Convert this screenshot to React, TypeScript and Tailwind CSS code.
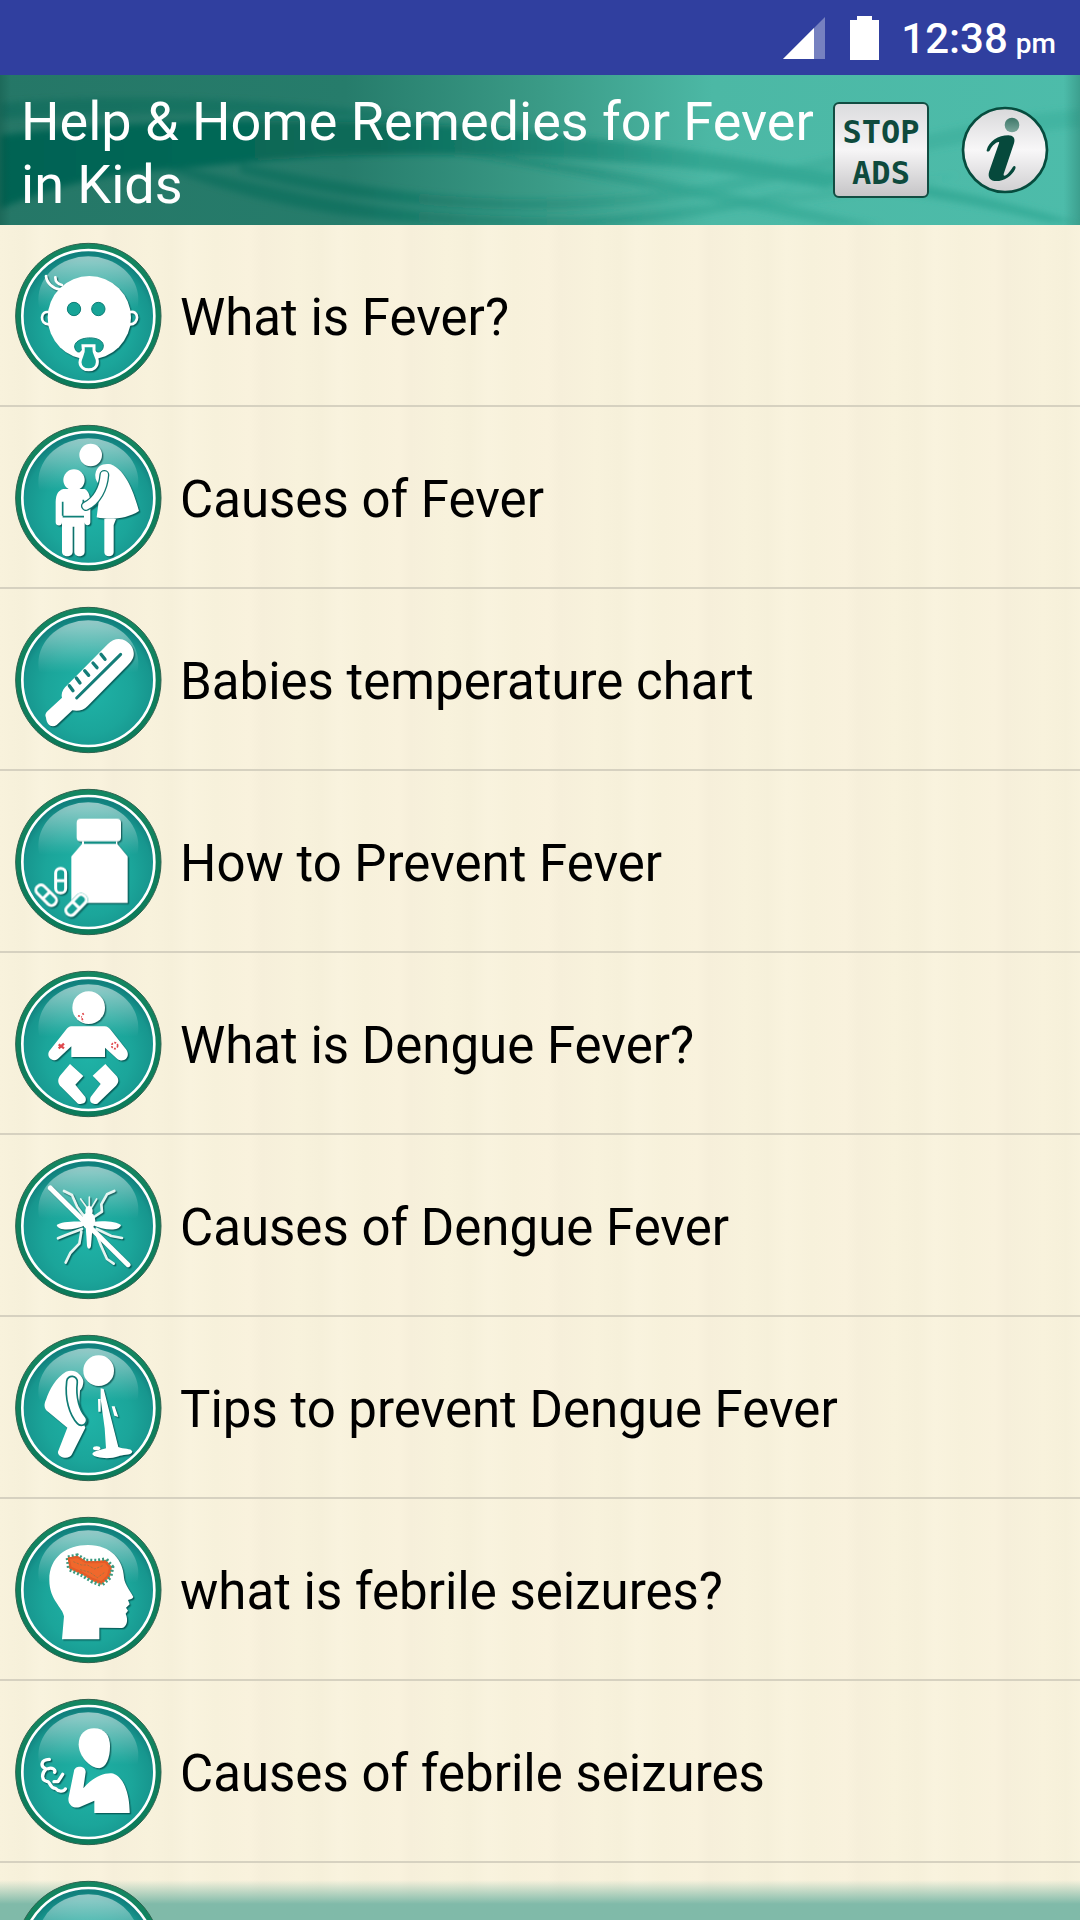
import { useId } from "react";
import type { ReactNode } from "react";

type Topic = {
  label: string;
  icon: ReactNode;
};

function BabyFace() {
  return (
    <>
      <g fill="none" stroke="#fff" strokeWidth="8" strokeLinecap="round">
        <path d="M138 139 C140 160 158 176 180 180" />
        <path d="M166 143 C166 156 174 164 186 166" />
        <path d="M148 248 C120 240 118 284 146 284" />
        <path d="M388 248 C418 238 420 286 388 284" />
      </g>
      <circle cx="268" cy="264" r="125" fill="#fff" />
      <g fill="#17a497" stroke="#0d7d76" strokeWidth="3">
        <circle cx="222" cy="238" r="20" />
        <circle cx="295" cy="238" r="20" />
        <path d="M224 352 C222 318 312 314 310 350 C308 368 290 372 286 360 L244 360 C240 372 226 368 224 352 Z" />
      </g>
      <path
        d="M249 348 H282 V360 C280 370 294 384 292 398 C290 428 242 428 240 398 C240 384 252 370 250 360 Z"
        fill="#17a497"
        stroke="#fff"
        strokeWidth="9"
      />
    </>
  );
}

function MotherChild() {
  return (
    <>
      <g fill="#fff">
        <circle cx="272" cy="130" r="34" />
        <circle cx="222" cy="205" r="32" />
        <path d="M286 188 C290 160 312 154 332 158 C378 174 404 250 417 298 C380 322 330 326 290 317 L302 222 C290 212 285 202 286 188 Z" />
        <path d="M313 322 H348 L341 340 V422 C341 438 313 438 313 422 Z" />
        <path d="M190 232 H254 C266 238 270 252 271 270 V332 C271 344 254 344 254 332 V322 V420 C254 438 223 438 223 420 V345 H218 V420 C218 438 186 438 186 420 V332 C186 346 167 344 167 332 V270 C168 246 176 236 190 232 Z" />
      </g>
      <path d="M188 315 H252 M188 270 V312 M250 264 V280" stroke="#0f8078" strokeWidth="5" fill="none" />
      <path d="M313 190 C310 230 290 268 258 283" fill="none" stroke="#0f7770" strokeWidth="30" strokeLinecap="round" />
      <path d="M313 190 C310 230 290 268 258 283" fill="none" stroke="#fff" strokeWidth="22" strokeLinecap="round" />
    </>
  );
}

function Thermometer() {
  return (
    <>
      <path
        d="M138 372 C134 364 137 358 143 352 L186 312 C182 298 190 284 202 274 L323 152 C348 124 382 136 396 160 C408 184 398 200 384 214 L263 337 C250 350 234 354 217 350 L170 394 C154 404 140 392 138 372 Z"
        fill="#fff"
      />
      <path d="M230 313 L362 182" stroke="#147d78" strokeWidth="9" strokeLinecap="round" />
      <path
        d="M208 276 L219 291 M229 253 L240 268 M254 231 L266 245 M279 208 L291 222 M303 182 L315 197"
        stroke="#147d78"
        strokeWidth="10"
        strokeLinecap="round"
      />
    </>
  );
}

function MedicineBottle() {
  return (
    <>
      <rect x="230" y="129" width="133" height="68" rx="12" fill="#fff" />
      <path d="M246 197 H352 V205 L383 242 V382 H214 V242 L246 205 Z" fill="#fff" />
      <path d="M252 201 H348" stroke="#108e84" strokeWidth="7" />
      <g fill="#17a095" stroke="#fff" strokeWidth="9">
        <g>
          <rect x="167" y="278" width="30" height="74" rx="14" />
          <path d="M167 315 H197" />
        </g>
        <g transform="rotate(-45 138 358)">
          <rect x="123" y="322" width="30" height="74" rx="14" />
          <path d="M123 359 H153" />
        </g>
        <g transform="rotate(44 228 388)">
          <rect x="208" y="346" width="40" height="84" rx="18" fill="#17a095" stroke="none" />
          <rect x="213" y="351" width="30" height="74" rx="14" />
          <path d="M213 388 H243" />
        </g>
      </g>
    </>
  );
}

function BabyRash() {
  return (
    <>
      <g fill="#fff">
        <circle cx="266" cy="150" r="49" />
        <path d="M214 206 H314 C322 206 326 210 332 216 L378 275 C394 296 372 318 352 304 L315 270 V298 H214 V266 L174 303 C154 318 134 292 152 275 L198 216 C203 210 208 206 214 206 Z" />
        <path d="M210 319 L250 355 L226 381 L256 418 C262 434 250 442 234 438 L180 384 C172 374 174 362 180 354 Z" />
        <path d="M316 319 L278 354 L302 379 L272 418 C266 434 276 442 292 438 L348 384 C358 374 356 362 349 354 Z" />
      </g>
      <g fill="none" stroke="#e0494d" strokeWidth="5" strokeDasharray="6 4">
        <path d="M234 174 L246 178 M248 166 L252 174 M246 182 L249 192" />
        <path d="M176 260 L192 272 M192 258 L176 272" strokeWidth="7" strokeDasharray="none" />
        <circle cx="344" cy="264" r="9" />
      </g>
    </>
  );
}

function Mosquito() {
  return (
    <>
      <g fill="none" stroke="#e6f5f2" strokeWidth="8" strokeLinecap="round" strokeLinejoin="round">
        <path d="M192 154 L216 166 L232 202 L254 232" />
        <path d="M343 154 L321 164 L304 194 L306 216 L282 232" />
        <path d="M174 296 L200 285 L246 268" />
        <path d="M366 295 L334 289 L290 268" />
        <path d="M197 369 L211 340 L238 312 L244 276" />
        <path d="M341 372 L321 358 L303 318 L288 278" />
        <path d="M242 178 L260 203 M290 178 L275 203 M268 172 V206" strokeWidth="5" />
      </g>
      <g fill="#fff">
        <ellipse cx="267" cy="214" rx="11" ry="16" />
        <ellipse cx="266" cy="243" rx="20" ry="26" />
        <path d="M257 258 H278 L273 318 C271 330 263 330 261 318 Z" />
        <path d="M256 246 C220 244 182 246 170 256 C174 276 226 272 256 256 Z" />
        <path d="M278 246 C314 242 352 246 363 256 C356 278 306 270 278 256 Z" />
      </g>
      <path d="M151 145 L384 375" stroke="#fff" strokeWidth="15" strokeLinecap="round" />
    </>
  );
}

function Vomiting() {
  return (
    <>
      <g fill="#fff">
        <circle cx="296" cy="147" r="46" />
        <path d="M198 150 C224 140 246 158 250 178 C250 190 246 202 240 206 L236 270 L256 318 L216 398 C208 416 172 408 174 390 L202 318 L146 272 C130 262 132 246 138 234 C148 204 168 168 198 150 Z" />
        <path d="M302 200 L311 202 L355 376 C370 384 394 378 397 390 C394 402 364 398 356 404 C330 414 284 410 277 398 C278 388 298 386 318 380 L314 320 L302 232 Z" />
        <ellipse cx="290" cy="380" rx="11" ry="6" />
        <path d="M294 232 L302 232 V270 H295 Z M335 254 L344 254 L355 286 L343 282 Z" />
      </g>
      <path d="M216 180 C210 230 224 274 244 295" fill="none" stroke="#0e7b74" strokeWidth="37" strokeLinecap="round" />
      <path d="M216 180 C210 230 224 274 244 295" fill="none" stroke="#fff" strokeWidth="27" strokeLinecap="round" />
    </>
  );
}

function HeadBrain() {
  return (
    <>
      <path
        d="M186 407 L192 338 C188 310 148 290 148 228 C148 160 200 124 264 124 C334 124 370 170 372 222 C374 244 396 268 400 280 C398 286 390 286 384 289 L389 302 L378 312 L384 321 L377 330 C386 350 380 370 366 373 L298 372 V407 Z"
        fill="#fff"
      />
      <path
        d="M204 162 L232 156 L258 172 L290 172 L318 168 L336 190 L330 220 L304 243 L278 233 L248 214 L208 196 Z"
        fill="#f26b2b"
        stroke="#3c9a80"
        strokeWidth="14"
        strokeDasharray="6 6"
      />
      <path
        d="M206 164 L232 160 L258 176 L290 176 L316 174 L330 192 L324 216 L304 236 L278 226 L248 208 L212 192 Z"
        fill="#f0682c"
        stroke="#e45a28"
        strokeWidth="6"
        strokeLinejoin="round"
      />
      <path
        d="M220 174 L244 184 L262 184 L284 196 L308 186 M240 198 L270 206 L292 222 L314 206"
        fill="none"
        stroke="#a9713f"
        strokeWidth="3"
        strokeDasharray="7 4"
      />
    </>
  );
}

function Coughing() {
  return (
    <>
      <g fill="#fff">
        <path d="M282 128 C314 128 330 150 330 182 C330 218 318 246 298 248 C270 248 236 212 236 176 C236 146 256 128 282 128 Z" />
        <path d="M222 256 C224 238 258 238 257 260 L250 308 C276 278 306 262 334 263 C372 268 390 330 389 382 H283 V345 L238 365 C214 370 202 352 206 334 Z" />
      </g>
      <path
        d="M148 221 C122 222 120 242 138 250 C124 264 124 284 140 287 C152 286 148 308 166 308 C174 318 190 320 196 310 M144 249 C156 244 168 252 164 260 M188 266 L174 288 L162 288"
        fill="none"
        stroke="#fff"
        strokeWidth="10"
        strokeLinecap="round"
        strokeLinejoin="round"
      />
    </>
  );
}

const topics: Topic[] = [
  { label: "What is Fever?", icon: <BabyFace /> },
  { label: "Causes of Fever", icon: <MotherChild /> },
  { label: "Babies temperature chart", icon: <Thermometer /> },
  { label: "How to Prevent Fever", icon: <MedicineBottle /> },
  { label: "What is Dengue Fever?", icon: <BabyRash /> },
  { label: "Causes of Dengue Fever", icon: <Mosquito /> },
  { label: "Tips to prevent Dengue Fever", icon: <Vomiting /> },
  { label: "what is febrile seizures?", icon: <HeadBrain /> },
  { label: "Causes of febrile seizures", icon: <Coughing /> },
  { label: "", icon: null },
];

function Badge({ children }: { children: ReactNode }) {
  const id = useId();

  return (
    <svg viewBox="45 37 444 444" className="size-[148px] shrink-0" aria-hidden="true">
      <defs>
        <linearGradient id={`${id}rim`} x1="0" y1="0" x2="0" y2="1">
          <stop offset="0" stopColor="#148661" />
          <stop offset="1" stopColor="#0b7a5a" />
        </linearGradient>
        <radialGradient id={`${id}disc`} cx="0.5" cy="0.58" r="0.55">
          <stop offset="0" stopColor="#1fb3a7" />
          <stop offset="0.6" stopColor="#1ba59a" />
          <stop offset="0.88" stopColor="#17968e" />
          <stop offset="1" stopColor="#11807d" />
        </radialGradient>
        <linearGradient id={`${id}gloss`} x1="0" y1="0" x2="0" y2="1">
          <stop offset="0" stopColor="#fff" stopOpacity="0.55" />
          <stop offset="0.25" stopColor="#fff" stopOpacity="0.32" />
          <stop offset="0.5" stopColor="#fff" stopOpacity="0.08" />
          <stop offset="0.6" stopColor="#fff" stopOpacity="0" />
        </linearGradient>
      </defs>
      <circle cx="265" cy="259" r="218" fill={`url(#${id}rim)`} stroke="#2f6350" strokeWidth="3" />
      <circle cx="265" cy="259" r="198" fill={`url(#${id}disc)`} stroke="#fff" strokeWidth="8" />
      <ellipse cx="265" cy="210" rx="150" ry="130" fill={`url(#${id}gloss)`} />
      <g className="drop-shadow-[4px_4px_2px_rgba(0,60,60,0.65)]">{children}</g>
    </svg>
  );
}

function StatusBar() {
  return (
    <div className="flex h-[75px] shrink-0 items-center justify-end bg-[#303f9f] pr-6 text-white">
      <svg viewBox="0 0 42 44" className="mr-[25px] h-11 w-[42px]" aria-hidden="true">
        <path d="M42 1 V43 H0 Z" fill="#7681c0" />
        <path d="M31 12 V43 H0 Z" fill="#fff" />
      </svg>
      <svg viewBox="0 0 29 44" className="mr-[22px] h-11 w-[29px]" aria-hidden="true">
        <path d="M7 0 H22 V4 H29 V44 H0 V4 H7 Z" fill="#fff" />
      </svg>
      <p className="pt-2 text-[42px] leading-[50px] font-medium">
        12:38<span className="ml-2 text-[28px]">pm</span>
      </p>
    </div>
  );
}

function HeaderWaves() {
  return (
    <svg viewBox="0 0 1080 150" preserveAspectRatio="none" className="absolute inset-0 size-full" aria-hidden="true">
      <defs>
        <linearGradient id="header-base">
          <stop offset="0" stopColor="#257767" />
          <stop offset="0.32" stopColor="#267c6b" />
          <stop offset="0.5" stopColor="#3a9a86" />
          <stop offset="0.66" stopColor="#4cb8a5" />
          <stop offset="1" stopColor="#4dbcaa" />
        </linearGradient>
        <linearGradient id="header-wave" gradientUnits="userSpaceOnUse" x1="0" y1="0" x2="1080" y2="0">
          <stop offset="0" stopColor="#046353" />
          <stop offset="0.35" stopColor="#086b59" />
          <stop offset="0.5" stopColor="#1c8573" />
          <stop offset="0.65" stopColor="#34a793" />
          <stop offset="1" stopColor="#3aae9b" />
        </linearGradient>
        <filter id="header-soft">
          <feGaussianBlur stdDeviation="3" />
        </filter>
        <linearGradient id="header-side">
          <stop offset="0" stopColor="#0a4a3c" stopOpacity="0.3" />
          <stop offset="0.01" stopColor="#0a4a3c" stopOpacity="0" />
          <stop offset="0.985" stopColor="#0a4a3c" stopOpacity="0" />
          <stop offset="1" stopColor="#0a4a3c" stopOpacity="0.25" />
        </linearGradient>
      </defs>
      <rect width="1080" height="150" fill="url(#header-base)" />
      <g filter="url(#header-soft)" fill="url(#header-wave)">
        <path d="M0 60 C150 42 360 42 500 54 C620 66 700 74 830 98 V114 C720 94 600 82 460 80 C320 78 260 86 200 92 C120 96 60 108 0 134 Z" />
        <path d="M830 96 C920 106 1000 124 1080 148 H1050 C980 130 900 116 830 110 Z" />
        <path d="M140 84 C260 104 340 142 560 142 C660 142 740 128 800 112 C740 140 640 154 540 152 C340 152 240 124 140 84 Z" opacity="0.5" />
        <path d="M240 88 C380 116 500 138 680 114 C860 80 960 44 1080 34 V52 C960 64 840 94 700 122 C520 148 360 130 240 98 Z" opacity="0.5" />
        <path d="M460 80 C580 84 700 112 880 150 H830 C700 124 560 94 460 80 Z" opacity="0.7" />
        <path d="M0 28 C140 16 320 26 440 46 C300 40 140 34 0 44 Z" opacity="0.4" />
        <path d="M560 150 C700 124 800 122 960 100 C820 130 720 134 620 150 Z" opacity="0.4" />
      </g>
      <rect width="1080" height="150" fill="url(#header-side)" />
    </svg>
  );
}

function Header() {
  return (
    <header className="relative h-[150px] shrink-0 overflow-hidden">
      <HeaderWaves />
      <div className="relative flex h-full items-center pr-[31px] pl-[21px]">
        <h1 className="flex-1 pt-1.5 text-[54px] leading-[63px] text-white">Help &amp; Home Remedies for Fever in Kids</h1>
        <button
          type="button"
          className="flex size-24 shrink-0 flex-col items-center justify-center rounded-md border-2 border-[#124d42] bg-linear-to-b from-[#dcdcde] via-[#f6f5f6] to-[#c6c5c7] pt-1.5 font-['DejaVu_Sans_Mono',monospace] text-[32px] leading-[41px] font-bold text-[#0e4a3d]"
        >
          <span>STOP</span>
          <span>ADS</span>
        </button>
        <button type="button" aria-label="Information" className="ml-8 shrink-0">
          <svg viewBox="0 0 264 264" className="size-[88px]" aria-hidden="true">
            <defs>
              <linearGradient id="info-face" x1="0" y1="0" x2="0" y2="1">
                <stop offset="0" stopColor="#d8d8da" />
                <stop offset="0.5" stopColor="#f8f7f8" />
                <stop offset="1" stopColor="#d0cfd1" />
              </linearGradient>
              <linearGradient id="info-dot" x1="0" y1="0" x2="0" y2="1">
                <stop offset="0" stopColor="#3d7668" />
                <stop offset="1" stopColor="#7ba79c" />
              </linearGradient>
            </defs>
            <circle cx="132" cy="132" r="126" fill="url(#info-face)" stroke="#064c3e" strokeWidth="8" />
            <circle cx="153" cy="57" r="22" fill="url(#info-dot)" />
            <path
              d="M77 132 C84 106 112 88 142 88 C156 88 164 96 159 112 L128 204 C126 216 142 206 156 182 C160 178 166 180 163 188 C152 212 124 228 100 225 C82 222 80 208 86 192 L114 112 C118 102 96 112 87 132 C84 138 76 138 77 132 Z"
              fill="#06493c"
            />
          </svg>
        </button>
      </div>
    </header>
  );
}

export default function App() {
  return (
    <div className="flex h-screen flex-col overflow-hidden bg-[#f7f1dc] font-[Roboto,sans-serif] text-black">
      <StatusBar />
      <Header />
      <main className="relative min-h-0 flex-1 overflow-hidden bg-[repeating-linear-gradient(90deg,#f8f2dc_0px,#f6f0da_23px,#f9f3de_41px,#f7f1db_67px,#f9f2dd_101px,#f6efda_113px,#f8f2dc_149px)]">
        {/* strip that fades in under the last row */}
        <div className="absolute inset-x-0 bottom-0 h-10 bg-linear-to-b from-[#80baa9]/0 via-[#80baa9] via-60% to-[#80baa9]" />
        <ul className="relative">
          {topics.map((topic, i) => (
            <li key={i} className="border-b-2 border-[#d6d1c0]">
              <button
                type="button"
                aria-label={topic.label || "More topics"}
                className="flex w-full items-center gap-[17px] pt-[17px] pb-[15px] pl-[15px] text-left text-[51px] leading-[60px]"
              >
                <Badge>{topic.icon}</Badge>
                <span className="pt-1">{topic.label}</span>
              </button>
            </li>
          ))}
        </ul>
      </main>
    </div>
  );
}
